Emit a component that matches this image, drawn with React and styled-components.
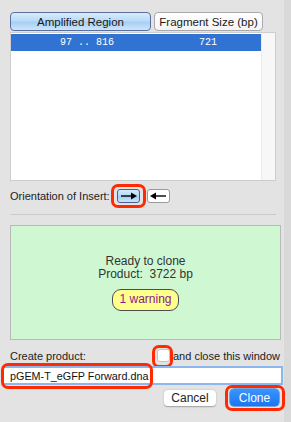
import React from 'react'
import styled, { createGlobalStyle } from 'styled-components'

const GlobalStyle = createGlobalStyle`
  html, body {
    margin: 0;
    padding: 0;
    background: #d9d9d9;
  }
  body {
    font-family: 'Liberation Sans', Arial, sans-serif;
    -webkit-font-smoothing: antialiased;
  }
`

const Window = styled.div`
  width: 284px;
  height: 422px;
  box-sizing: border-box;
  background: #e3e3e3;
  padding: 12px 0 0 10px;
  display: flex;
  flex-direction: column;
  color: #222;
  font-size: 11px;
`

const TabRow = styled.div`
  display: flex;
  gap: 3px;
  height: 19px;
`

const Tab = styled.div`
  width: ${(p) => p.w}px;
  box-sizing: border-box;
  border-radius: 4px;
  border: 1px solid ${(p) => (p.active ? '#5d6f9c' : '#a9a9a9')};
  background: ${(p) =>
    p.active
      ? 'linear-gradient(#d8ecfc 0%, #b9dbf8 45%, #a6cff4 55%, #cde6fb 100%)'
      : 'linear-gradient(#ffffff, #f4f4f4)'};
  display: flex;
  align-items: center;
  justify-content: center;
  font-size: 11.5px;
  color: #1a1a1a;
`

const List = styled.div`
  margin-top: 1px;
  width: 266px;
  height: 149px;
  box-sizing: border-box;
  border: 1px solid #cdcdcd;
  background: #fff;
  display: flex;
`

const Rows = styled.div`
  flex: 1;
  padding-top: 1px;
`

const Gutter = styled.div`
  width: 13px;
  background: #f7f7f7;
  border-left: 1px solid #ebebeb;
`

const Row = styled.div`
  height: 17px;
  background: ${(p) => (p.selected ? '#3173d2' : 'transparent')};
  color: ${(p) => (p.selected ? '#fff' : '#222')};
  display: grid;
  grid-template-columns: 49px 139px 1fr;
  align-items: center;
  font-family: 'Liberation Mono', 'DejaVu Sans Mono', monospace;
  font-size: 10px;
  white-space: pre;
`

const OrientRow = styled.div`
  margin-top: 7px;
  height: 15px;
  display: flex;
  align-items: center;
`

const Label = styled.span`
  width: ${(p) => (p.w ? `${p.w}px` : 'auto')};
  margin-left: ${(p) => p.ml || 0}px;
  white-space: nowrap;
`

const Marked = styled.span`
  position: relative;
  display: inline-flex;
  margin-left: ${(p) => p.ml || 0}px;
`

const Ring = styled.span`
  position: absolute;
  top: ${(p) => p.t}px;
  left: ${(p) => p.l}px;
  right: ${(p) => (p.r === undefined ? 'auto' : `${p.r}px`)};
  width: ${(p) => (p.w ? `${p.w}px` : 'auto')};
  bottom: ${(p) => p.b}px;
  box-sizing: border-box;
  border: 3px solid #ff2a00;
  border-radius: 7px;
  pointer-events: none;
`

const ArrowBtn = styled.span`
  width: 23px;
  height: 14px;
  box-sizing: border-box;
  border-radius: 3px;
  border: 1px solid ${(p) => (p.active ? '#4f5f86' : '#9a9a9a')};
  background: ${(p) =>
    p.active
      ? 'linear-gradient(#d5ebfc 0%, #b2d7f7 50%, #a3cdf4 55%, #cbe5fb 100%)'
      : '#fff'};
  display: flex;
  align-items: center;
  justify-content: center;
`

const Separator = styled.div`
  margin-top: 11px;
  width: 266px;
  height: 1px;
  background: #cbcbcb;
`

const StatusBox = styled.div`
  margin-top: 10px;
  width: 271px;
  height: 115px;
  box-sizing: border-box;
  border: 1px solid #b9b9b9;
  background: #cff8d2;
  display: flex;
  flex-direction: column;
  align-items: center;
  justify-content: center;
  color: #333;
  font-size: 12px;
  line-height: 13px;
  text-align: center;
`

const Pill = styled.div`
  margin-top: 8px;
  height: 22px;
  padding: 0 6px;
  box-sizing: border-box;
  border: 1px solid #4d4d4d;
  border-radius: 9px;
  background: #ffff8c;
  color: #8b1a8b;
  display: flex;
  align-items: center;
  font-size: 12px;
`

const CreateRow = styled.div`
  margin-top: 9px;
  height: 13px;
  display: flex;
  align-items: center;
  font-size: 11px;
`

const Check = styled.span`
  width: 13px;
  height: 13px;
  box-sizing: border-box;
  border: 1px solid #c4c4c4;
  border-radius: 3px;
  background: #fff;
`

const Field = styled.div`
  position: relative;
  margin: 4px 0 0 -8px;
  width: 281px;
  height: 19px;
  box-sizing: border-box;
  border: 2px solid #8cb7ec;
  background: #fff;
  display: flex;
  align-items: center;
  padding-left: 6px;
  font-size: 10.8px;
  color: #111;
`

const ButtonRow = styled.div`
  margin-top: 4px;
  width: 269px;
  display: flex;
  justify-content: flex-end;
  align-items: center;
  gap: 14px;
`

const PushButton = styled.span`
  width: ${(p) => p.w}px;
  height: ${(p) => p.h}px;
  box-sizing: border-box;
  border-radius: 4px;
  display: flex;
  align-items: center;
  justify-content: center;
  font-size: 12px;
  color: ${(p) => (p.primary ? '#fff' : '#222')};
  background: ${(p) =>
    p.primary ? 'linear-gradient(#3d94fb, #1a76f2)' : '#fff'};
  box-shadow: ${(p) =>
    p.primary ? '0 0 0 0.5px #1666d6' : '0 0.5px 1.5px rgba(0,0,0,0.3)'};
`

function Arrow({ left }) {
  return (
    <svg width='17' height='8' viewBox='0 0 17 8'>
      {left ? (
        <>
          <line x1='4' y1='4' x2='16' y2='4' stroke='#000' strokeWidth='1.4' />
          <polygon points='0,4 6,0.5 6,7.5' fill='#000' />
        </>
      ) : (
        <>
          <line x1='1' y1='4' x2='13' y2='4' stroke='#000' strokeWidth='1.4' />
          <polygon points='17,4 11,0.5 11,7.5' fill='#000' />
        </>
      )}
    </svg>
  )
}

export default function App() {
  return (
    <>
      <GlobalStyle />
      <Window>
        <TabRow>
          <Tab w={141} active>
            Amplified Region
          </Tab>
          <Tab w={109}>Fragment Size (bp)</Tab>
        </TabRow>
        <List>
          <Rows>
            <Row selected>
              <span />
              <span>97 .. 816</span>
              <span>721</span>
            </Row>
          </Rows>
          <Gutter />
        </List>
        <OrientRow>
          <Label w={107}>Orientation of Insert:</Label>
          <Marked>
            <ArrowBtn active>
              <Arrow />
            </ArrowBtn>
            <Ring t={-5} l={-6} r={-6} b={-5} />
          </Marked>
          <Marked ml={7}>
            <ArrowBtn>
              <Arrow left />
            </ArrowBtn>
          </Marked>
        </OrientRow>
        <Separator />
        <StatusBox>
          <div>Ready to clone</div>
          <div>Product:&nbsp; 3722 bp</div>
          <Pill>1 warning</Pill>
        </StatusBox>
        <CreateRow>
          <Label w={147}>Create product:</Label>
          <Marked>
            <Check />
            <Ring t={-4} l={-5} r={-3} b={-6} />
          </Marked>
          <Label ml={3}>and close this window</Label>
        </CreateRow>
        <Field>
          pGEM-T_eGFP Forward.dna
          <Ring t={-5} l={-3} w={152} b={-6} />
        </Field>
        <ButtonRow>
          <PushButton w={52} h={16}>
            Cancel
          </PushButton>
          <Marked>
            <PushButton w={49} h={17} primary>
              Clone
            </PushButton>
            <Ring t={-4} l={-5} r={-6} b={-5} />
          </Marked>
        </ButtonRow>
      </Window>
    </>
  )
}
